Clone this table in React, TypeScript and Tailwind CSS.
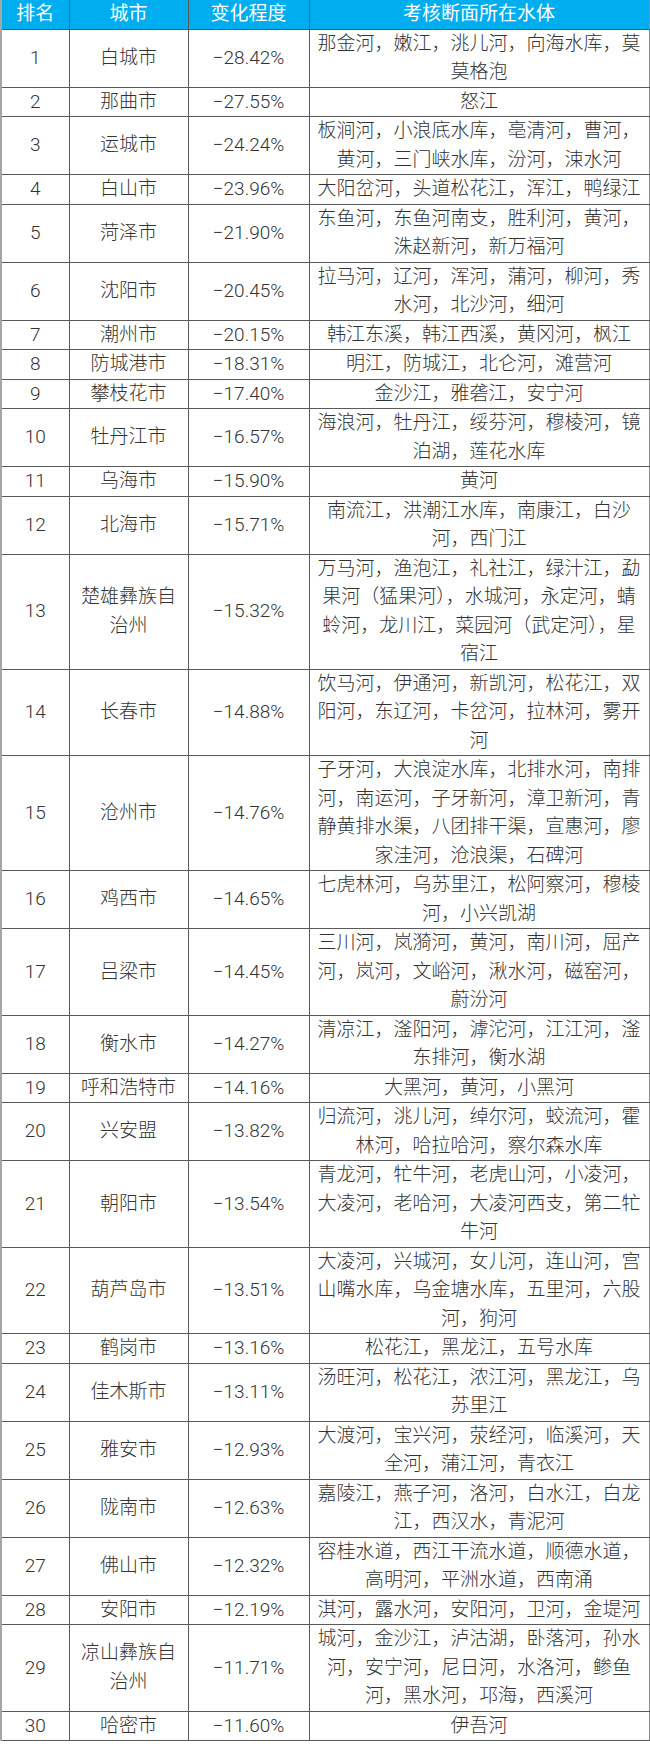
import React from "react";

const rows: [string, string, string, string][] = [
  ["1", "白城市", "−28.42%", "那金河，嫩江，洮儿河，向海水库，莫莫格泡"],
  ["2", "那曲市", "−27.55%", "怒江"],
  ["3", "运城市", "−24.24%", "板涧河，小浪底水库，亳清河，曹河，黄河，三门峡水库，汾河，涑水河"],
  ["4", "白山市", "−23.96%", "大阳岔河，头道松花江，浑江，鸭绿江"],
  ["5", "菏泽市", "−21.90%", "东鱼河，东鱼河南支，胜利河，黄河，洙赵新河，新万福河"],
  ["6", "沈阳市", "−20.45%", "拉马河，辽河，浑河，蒲河，柳河，秀水河，北沙河，细河"],
  ["7", "潮州市", "−20.15%", "韩江东溪，韩江西溪，黄冈河，枫江"],
  ["8", "防城港市", "−18.31%", "明江，防城江，北仑河，滩营河"],
  ["9", "攀枝花市", "−17.40%", "金沙江，雅砻江，安宁河"],
  ["10", "牡丹江市", "−16.57%", "海浪河，牡丹江，绥芬河，穆棱河，镜泊湖，莲花水库"],
  ["11", "乌海市", "−15.90%", "黄河"],
  ["12", "北海市", "−15.71%", "南流江，洪潮江水库，南康江，白沙河，西门江"],
  ["13", "楚雄彝族自治州", "−15.32%", "万马河，渔泡江，礼社江，绿汁江，勐果河（猛果河），水城河，永定河，蜻蛉河，龙川江，菜园河（武定河），星宿江"],
  ["14", "长春市", "−14.88%", "饮马河，伊通河，新凯河，松花江，双阳河，东辽河，卡岔河，拉林河，雾开河"],
  ["15", "沧州市", "−14.76%", "子牙河，大浪淀水库，北排水河，南排河，南运河，子牙新河，漳卫新河，青静黄排水渠，八团排干渠，宣惠河，廖家洼河，沧浪渠，石碑河"],
  ["16", "鸡西市", "−14.65%", "七虎林河，乌苏里江，松阿察河，穆棱河，小兴凯湖"],
  ["17", "吕梁市", "−14.45%", "三川河，岚漪河，黄河，南川河，屈产河，岚河，文峪河，湫水河，磁窑河，蔚汾河"],
  ["18", "衡水市", "−14.27%", "清凉江，滏阳河，滹沱河，江江河，滏东排河，衡水湖"],
  ["19", "呼和浩特市", "−14.16%", "大黑河，黄河，小黑河"],
  ["20", "兴安盟", "−13.82%", "归流河，洮儿河，绰尔河，蛟流河，霍林河，哈拉哈河，察尔森水库"],
  ["21", "朝阳市", "−13.54%", "青龙河，牤牛河，老虎山河，小凌河，大凌河，老哈河，大凌河西支，第二牤牛河"],
  ["22", "葫芦岛市", "−13.51%", "大凌河，兴城河，女儿河，连山河，宫山嘴水库，乌金塘水库，五里河，六股河，狗河"],
  ["23", "鹤岗市", "−13.16%", "松花江，黑龙江，五号水库"],
  ["24", "佳木斯市", "−13.11%", "汤旺河，松花江，浓江河，黑龙江，乌苏里江"],
  ["25", "雅安市", "−12.93%", "大渡河，宝兴河，荥经河，临溪河，天全河，蒲江河，青衣江"],
  ["26", "陇南市", "−12.63%", "嘉陵江，燕子河，洛河，白水江，白龙江，西汉水，青泥河"],
  ["27", "佛山市", "−12.32%", "容桂水道，西江干流水道，顺德水道，高明河，平洲水道，西南涌"],
  ["28", "安阳市", "−12.19%", "淇河，露水河，安阳河，卫河，金堤河"],
  ["29", "凉山彝族自治州", "−11.71%", "城河，金沙江，泸沽湖，卧落河，孙水河，安宁河，尼日河，水洛河，鲹鱼河，黑水河，邛海，西溪河"],
  ["30", "哈密市", "−11.60%", "伊吾河"],
];

export default function App() {
  return (
    <div className="w-[650px] bg-white" style={{ fontFamily: 'Roboto, "Noto Sans CJK SC", sans-serif' }}>
      <table className="w-[648px] table-fixed border-collapse border-l-2 border-l-[#a6a6a6] border-r border-r-[#8c8c8c] border-b border-b-[#8c8c8c] text-[19px] font-light leading-[28.5px] text-[#333333]">
        <colgroup>
          <col className="w-[68px]" />
          <col className="w-[119px]" />
          <col className="w-[121px]" />
          <col className="w-[340px]" />
        </colgroup>
        <thead>
          <tr className="bg-[#00adef] text-white">
            <th className="border-r border-b border-[#5a5a5a] px-1 py-0 text-center font-normal">排名</th>
            <th className="border-r border-b border-[#5a5a5a] px-1 py-0 text-center font-normal">城市</th>
            <th className="border-r border-b border-[#5a5a5a] px-1 py-0 text-center font-normal">变化程度</th>
            <th className="border-b border-[#5a5a5a] px-1 py-0 text-center font-normal">考核断面所在水体</th>
          </tr>
        </thead>
        <tbody>
          {rows.map((r) => (
            <tr key={r[0]}>
              <td className="border-r border-b border-[#5a5a5a] px-1 py-0 text-center align-middle">{r[0]}</td>
              <td className="border-r border-b border-[#5a5a5a] px-1 py-0 text-center align-middle">{r[1]}</td>
              <td className="border-r border-b border-[#5a5a5a] px-1 py-0 text-center align-middle">{r[2]}</td>
              <td className="border-b border-[#5a5a5a] px-1 py-0 text-center align-middle">{r[3]}</td>
            </tr>
          ))}
        </tbody>
      </table>
    </div>
  );
}
